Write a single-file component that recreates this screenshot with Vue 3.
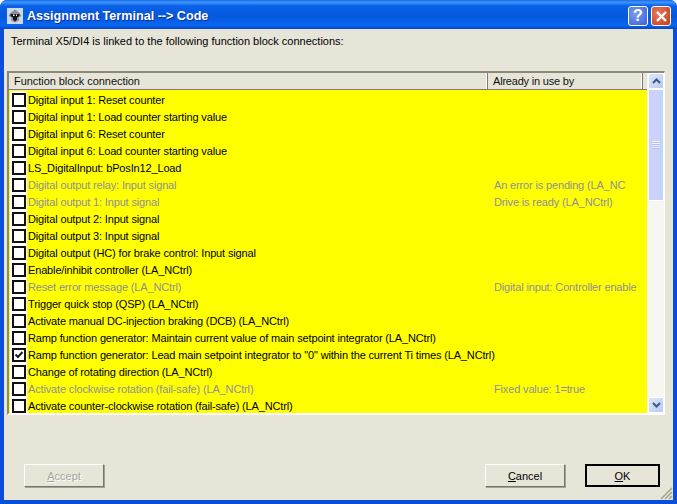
<script setup>
const rows = [
  { label: 'Digital input 1: Reset counter' },
  { label: 'Digital input 1: Load counter starting value' },
  { label: 'Digital input 6: Reset counter' },
  { label: 'Digital input 6: Load counter starting value' },
  { label: 'LS_DigitalInput: bPosIn12_Load' },
  { label: 'Digital output relay: Input signal', usedBy: 'An error is pending (LA_NC', off: true },
  { label: 'Digital output 1: Input signal', usedBy: 'Drive is ready (LA_NCtrl)', off: true },
  { label: 'Digital output 2: Input signal' },
  { label: 'Digital output 3: Input signal' },
  { label: 'Digital output (HC) for brake control: Input signal' },
  { label: 'Enable/inhibit controller (LA_NCtrl)' },
  { label: 'Reset error message (LA_NCtrl)', usedBy: 'Digital input: Controller enable', off: true },
  { label: 'Trigger quick stop (QSP) (LA_NCtrl)' },
  { label: 'Activate manual DC-injection braking (DCB) (LA_NCtrl)' },
  { label: 'Ramp function generator: Maintain current value of main setpoint integrator (LA_NCtrl)' },
  { label: 'Ramp function generator: Lead main setpoint integrator to "0" within the current Ti times (LA_NCtrl)', checked: true },
  { label: 'Change of rotating direction (LA_NCtrl)' },
  { label: 'Activate clockwise rotation (fail-safe) (LA_NCtrl)', usedBy: 'Fixed value: 1=true', off: true },
  { label: 'Activate counter-clockwise rotation (fail-safe) (LA_NCtrl)' },
]
</script>

<template>
  <div class="window">
    <div class="titlebar">
      <svg class="app-icon" width="16" height="16" viewBox="0 0 16 16">
        <rect width="16" height="16" fill="#cfd8ea" />
        <path d="M8 1.500 12 4.500 14.500 8 11.500 9.500 12 12.500 8 14.500 4 12.500 4.500 9.500 1.500 8 4 4.500Z" fill="#8b8f99" />
        <path d="M3.500 6h9v2l-2.500 1.500v2L8 13.500 6 11.500v-2L3.500 8Z" fill="#15151c" />
        <path d="M6 6.500h1.500v1.500H6zM9 6.500h1v1.500H9z" fill="#fff" />
      </svg>
      <span class="title">Assignment Terminal --&gt; Code</span>
      <button class="cap-btn help">?</button>
      <button class="cap-btn close">
        <svg width="13" height="13" viewBox="0 0 13 13">
          <path d="M2 2 11 11M11 2 2 11" stroke="#fff" stroke-width="2.400" />
        </svg>
      </button>
    </div>

    <div class="body">
      <p class="intro">Terminal X5/DI4 is linked to the following function block connections:</p>

      <div class="listview">
        <div class="list-main">
          <div class="header">
            <div class="col col-name">Function block connection</div>
            <div class="col col-used">Already in use by</div>
            <div class="col-rest"></div>
          </div>
          <div class="rows">
            <div v-for="row in rows" :key="row.label" class="row" :class="{ off: row.off }">
              <span class="check-wrap">
                <span class="check">
                  <svg v-if="row.checked" width="10" height="10" viewBox="0 0 10 10">
                    <path d="M1.500 4.500 4 7 8.500 2" fill="none" stroke="#1d1d1d" stroke-width="2" />
                  </svg>
                </span>
              </span>
              <span class="label">{{ row.label }}</span>
              <span class="used">{{ row.usedBy }}</span>
            </div>
          </div>
        </div>

        <div class="scrollbar">
          <div class="sb-btn">
            <svg width="9" height="6" viewBox="0 0 9 6"><path d="M1 5 4.500 1.500 8 5" fill="none" stroke="#3b5a86" stroke-width="2" /></svg>
          </div>
          <div class="sb-thumb">
            <div class="grip"></div>
          </div>
          <div class="sb-track"></div>
          <div class="sb-btn">
            <svg width="9" height="6" viewBox="0 0 9 6"><path d="M1 1 4.500 4.500 8 1" fill="none" stroke="#3b5a86" stroke-width="2" /></svg>
          </div>
        </div>
      </div>

      <div class="buttons">
        <button class="btn disabled"><u>A</u>ccept</button>
        <div class="spacer"></div>
        <button class="btn"><u>C</u>ancel</button>
        <button class="btn default"><u>O</u>K</button>
      </div>
      <svg class="grip-corner" width="13" height="13" viewBox="0 0 13 13">
        <path d="M12 1 1 12M12 5 5 12M12 9 9 12" stroke="#a5a294" stroke-width="1.500" />
      </svg>
    </div>
  </div>
</template>

<style>
html, body { margin: 0; }
</style>

<style scoped>
.window {
  width: 677px;
  height: 504px;
  box-sizing: border-box;
  display: flex;
  flex-direction: column;
  background: #0a4fdc;
  border-radius: 7px 7px 0 0;
  padding: 0 4px 4px;
  font-family: "Liberation Sans", Arial, sans-serif;
  font-size: 11px;
  color: #000;
  overflow: hidden;
}

.titlebar {
  height: 29px;
  flex: none;
  margin: 0 -4px;
  padding: 3px 6px 0 7px;
  display: flex;
  align-items: center;
  box-sizing: border-box;
  background: linear-gradient(180deg, #1a6aea 0%, #3d95ff 8%, #0a62e8 20%, #0458dc 55%, #0a66f0 88%, #0346c8 100%);
}

.app-icon { flex: none; }

.title {
  margin-left: 4px;
  flex: 1;
  color: #fff;
  font-weight: 700;
  font-size: 12.600px;
  text-shadow: 1px 1px 0 #0a2f9c;
}

.cap-btn {
  width: 20px;
  height: 20px;
  padding: 0;
  margin-left: 3px;
  border: 1px solid #fff;
  border-radius: 3px;
  display: flex;
  align-items: center;
  justify-content: center;
  color: #fff;
  font: 700 16px "Liberation Sans", sans-serif;
}

.help { background: radial-gradient(circle at 35% 35%, #7a9cf0, #3a5fd8); }
.close { background: radial-gradient(circle at 35% 35%, #e8795a, #c23d1c); }

.body {
  position: relative;
  flex: 1;
  min-height: 0;
  display: flex;
  flex-direction: column;
  background: #e6e5d8;
  padding: 0 8px 13px 3px;
}

.intro {
  margin: 0;
  padding: 6px 0 0 4px;
  height: 42px;
  box-sizing: border-box;
  line-height: 13px;
}

.listview {
  flex: none;
  display: flex;
  height: 344px;
  box-sizing: border-box;
  border-style: solid;
  border-width: 2px 1px 2px 2px;
  border-color: #8a8878 #fff #fff #8a8878;
  background: #fff;
}

.list-main {
  flex: 1;
  min-width: 0;
  display: flex;
  flex-direction: column;
}

.header {
  flex: none;
  height: 16px;
  display: flex;
  background: #e6e5d8;
  line-height: 16px;
  color: #111;
  letter-spacing: -0.05px;
}

.col {
  box-sizing: border-box;
  padding-left: 5px;
  border-right: 1px solid #7e7c70;
  box-shadow: inset -1px 0 0 #fff;
}

.col-name { width: 479px; }
.col-used { width: 155px; letter-spacing: -0.2px; }
.col-rest { flex: 1; }

.rows {
  flex: 1;
  min-height: 0;
  background: #ff0;
  overflow: hidden;
  padding-top: 1px;
  border-top: 1px solid #7e7c70;
  letter-spacing: -0.15px;
}

.row {
  height: 17px;
  display: flex;
  align-items: center;
  white-space: nowrap;
}

.row.off { color: #8f8f9a; }

.check-wrap {
  flex: none;
  width: 17px;
  height: 17px;
  margin-left: 1px;
  padding-right: 1px;
  box-sizing: border-box;
  display: flex;
  align-items: center;
  justify-content: flex-end;
  background: #fff;
}

.check {
  width: 14px;
  height: 14px;
  box-sizing: border-box;
  border: 2px solid #111;
  background: #fff;
  display: flex;
  align-items: center;
  justify-content: center;
}

.label {
  width: 466px;
  margin-left: 1px;
  flex: none;
}

.used {
  flex: none;
}

.scrollbar {
  flex: none;
  width: 17px;
  padding-left: 1px;
  box-sizing: border-box;
  display: flex;
  flex-direction: column;
  background: #f7f6f0;
}

.sb-btn {
  flex: none;
  height: 16px;
  background: linear-gradient(135deg, #dfe8fb, #b7caf5);
  border: 1px solid #fff;
  border-radius: 2px;
  box-sizing: border-box;
  display: flex;
  align-items: center;
  justify-content: center;
}

.sb-thumb {
  flex: none;
  height: 112px;
  box-sizing: border-box;
  border: 1px solid #fff;
  border-radius: 2px;
  background: linear-gradient(90deg, #c8d3fa, #d0d0fc 50%, #bcd6f8);
  display: flex;
  align-items: center;
  justify-content: center;
}

.grip {
  width: 8px;
  height: 8px;
  background: repeating-linear-gradient(180deg, #eef3fe 0 1px, #aebff0 1px 2px);
}

.sb-track { flex: 1; }

.buttons {
  flex: 1;
  display: flex;
  align-items: flex-end;
  gap: 20px;
  padding: 0 5px 0 17px;
}

.spacer { flex: 1; }

.btn {
  width: 80px;
  height: 23px;
  padding: 0;
  box-sizing: border-box;
  border: 1px solid;
  border-color: #fff #77756a #77756a #fff;
  box-shadow: 1px 1px 0 #a5a294;
  background: #e6e5d8;
  font: 11px "Liberation Sans", Arial, sans-serif;
  color: #000;
}

.btn.disabled { color: #a5a498; text-shadow: 1px 1px 0 #fff; }

.btn.default {
  width: 75px;
  border: 2px solid #000;
  box-shadow: none;
}

.grip-corner {
  position: absolute;
  right: 0;
  bottom: 0;
}
</style>
